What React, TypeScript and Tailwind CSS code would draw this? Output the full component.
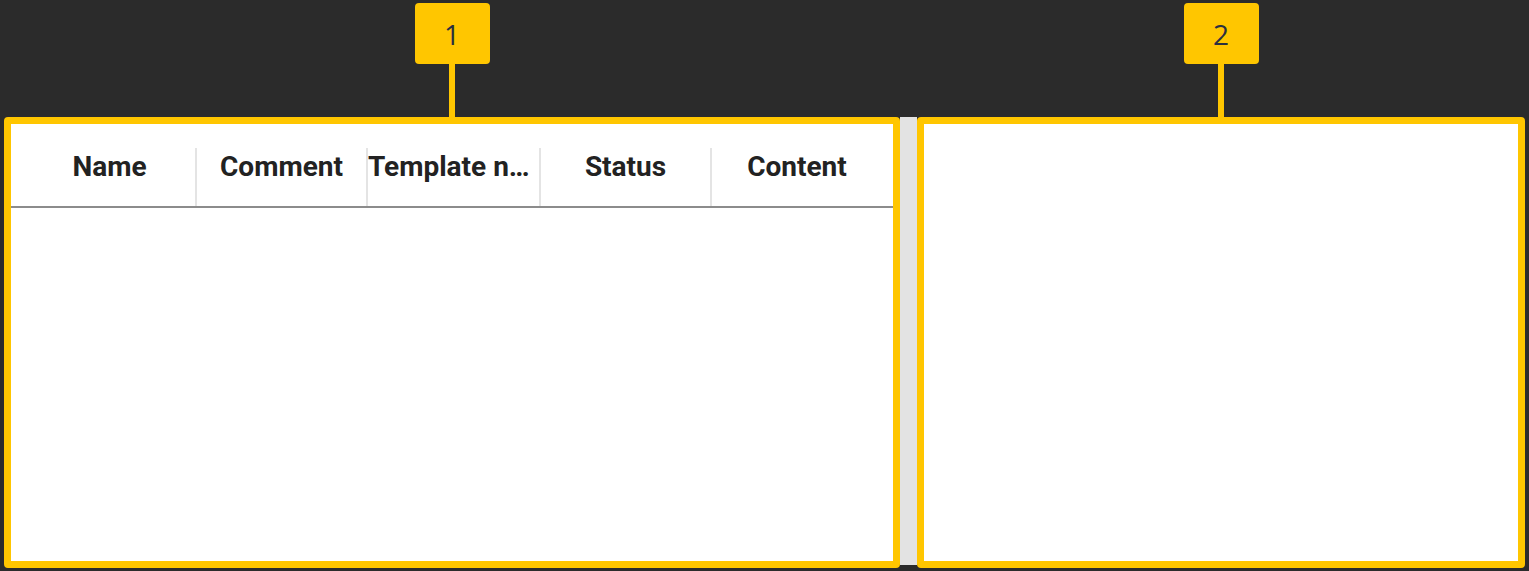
import React from 'react';

const columns = [
  { label: 'Name', width: 'w-[171px]', truncate: false },
  { label: 'Comment', width: 'w-[169px]', truncate: false },
  { label: 'Template name', width: 'w-[171px]', truncate: true },
  { label: 'Status', width: 'w-[169px]', truncate: false },
  { label: 'Content', width: 'w-[170px]', truncate: false },
];

const Callout: React.FC<{ n: number }> = ({ n }) => (
  <>
    <div className="w-[75px] h-[61px] rounded-[4px] bg-[#ffc600] flex items-center justify-center text-[28px] leading-none text-[#2a2f40] font-['Open_Sans',sans-serif]">
      {n}
    </div>
    <div className="w-[6px] h-[53px] bg-[#ffc600]" />
  </>
);

const TableHeader: React.FC = () => (
  <div className="flex h-[84px] pl-[13px] border-b-2 border-[#8c8c8c] font-['Roboto',sans-serif] font-bold text-[28px] text-[#222222]">
    {columns.map((col, i) => (
      <React.Fragment key={col.label}>
        {i > 0 && <div className="self-end w-[2px] h-[58px] bg-[#e4e4e4]" />}
        <div
          className={
            col.truncate
              ? `${col.width} flex items-center min-w-0 pt-[4px]`
              : `${col.width} flex items-center justify-center pt-[4px]`
          }
        >
          <span className={col.truncate ? 'block truncate pr-[6px]' : 'block'}>{col.label}</span>
        </div>
      </React.Fragment>
    ))}
  </div>
);

export default function App() {
  return (
    <div className="w-[1529px] h-[571px] bg-[#2b2b2b] overflow-hidden">
      <div className="flex pl-[4px] pt-[3px]">
        {/* Panel 1: table */}
        <div className="w-[896px] flex flex-col items-center">
          <Callout n={1} />
          <div className="w-full h-[451px] rounded-[4px] border-[7px] border-[#ffc600] bg-white">
            <TableHeader />
          </div>
        </div>

        {/* Splitter */}
        <div className="w-[17px] mt-[114px] h-[448px] bg-[#e3e3e3]" />

        {/* Panel 2: empty */}
        <div className="w-[608px] flex flex-col items-center">
          <Callout n={2} />
          <div className="w-full h-[451px] rounded-[4px] border-[7px] border-[#ffc600] bg-white" />
        </div>
      </div>
    </div>
  );
}
